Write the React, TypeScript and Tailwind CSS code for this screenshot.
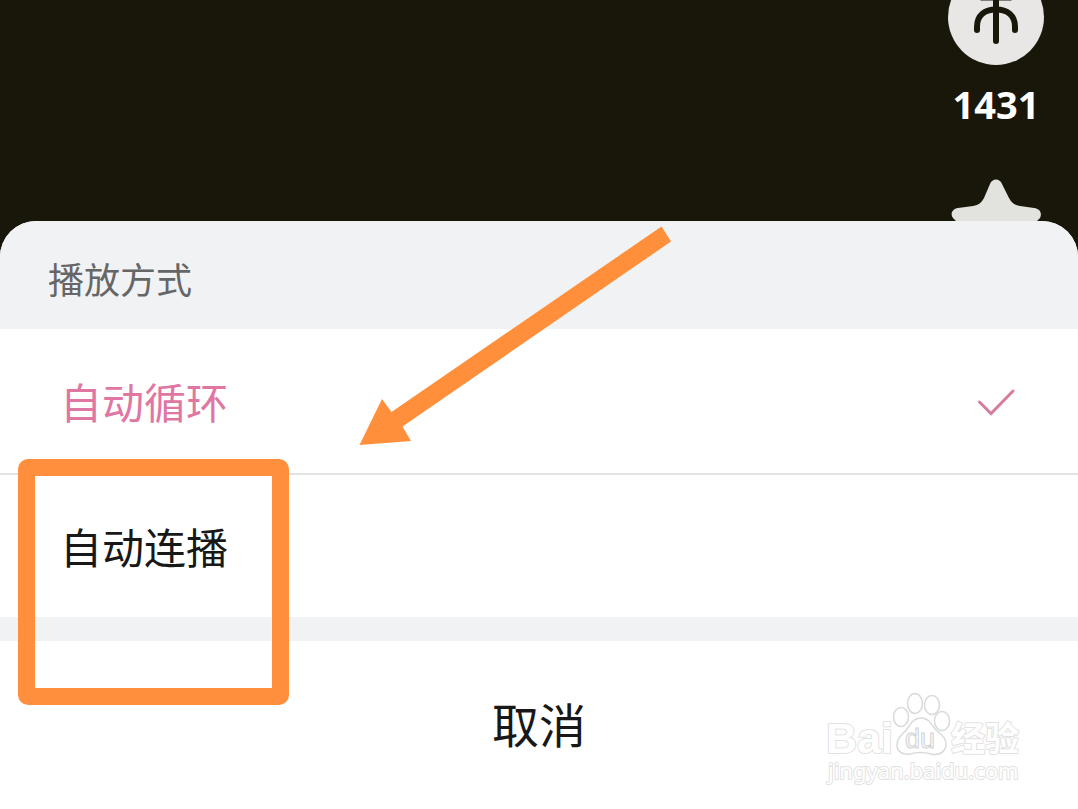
import { useState } from "react";

const modes = [
  { id: "loop", label: "自动循环" },
  { id: "continue", label: "自动连播" },
];

function VideoActions() {
  return (
    <div className="ml-auto flex w-[164px] flex-col items-center text-white">
      <button type="button" aria-label="投币" className="h-[66px] w-24 overflow-hidden">
        <svg viewBox="0 0 96 66" className="h-[66px] w-24" fill="none">
          <circle cx="48" cy="17" r="48" fill="#e9e6e6" />
          <g stroke="#181709" strokeWidth="6" strokeLinecap="round">
            <path d="M48 -10V41" />
            <path d="M34 -2.500H62" />
            <path d="M29 30V27C29 15 37 9.500 48 9.500C59 9.500 67 15 67 27V30" />
          </g>
        </svg>
      </button>
      <span className="mt-[18px] text-[38px] leading-10 font-bold">1431</span>
      <button type="button" aria-label="收藏" className="mt-[54px] h-[43px] w-24 overflow-hidden">
        <svg viewBox="0 0 96 43" className="h-[43px] w-24" fill="#e2e3df">
          <path d="M10 30L25 28C31 27 33 25 36 20L42 6C44 0 52 0 54 6L61 20C64 25 66 27 72 28L86 30C93 31 94 36 92 40L89 43H8L5 40C2 36 4 31 10 30Z" />
        </svg>
      </button>
    </div>
  );
}

function Watermark() {
  return (
    <svg
      viewBox="0 0 200 96"
      className="pointer-events-none absolute right-[54px] bottom-[22px] h-24 w-[200px]"
      fill="#fff"
      stroke="#e2e2e2"
      strokeWidth="2"
      strokeLinejoin="round"
    >
      <g fontWeight="700" paintOrder="stroke">
        <text x="2" y="62" fontSize="43" fontFamily="'Liberation Sans', sans-serif">Bai</text>
        <text x="127" y="60" fontSize="34" fontFamily="'Noto Sans CJK SC', sans-serif">经验</text>
      </g>
      <g strokeWidth="1.500" stroke="#dadada">
        <ellipse cx="77" cy="26" rx="7.500" ry="9.500" />
        <ellipse cx="91" cy="12.500" rx="7.500" ry="10" />
        <ellipse cx="108" cy="14" rx="7.500" ry="9.500" />
        <ellipse cx="118" cy="30" rx="7.500" ry="9.500" />
        <path d="M97 27C90 27 87 32 83 38C79 43 73 46 73 54C73 61 79 64 86 63C93 61 100 61 107 63C115 65 122 61 122 53C122 46 116 43 111 38C107 32 104 27 97 27Z" />
      </g>
      <text x="81" y="57" fontSize="27" strokeWidth="1" stroke="#d0d0d0" fontFamily="'Liberation Sans', sans-serif">du</text>
      <text x="4" y="88" fontSize="22" paintOrder="stroke" fontFamily="'Noto Sans', sans-serif">jingyan.baidu.com</text>
    </svg>
  );
}

export default function App() {
  const [selected, setSelected] = useState("loop");

  return (
    <main className="relative flex min-h-screen flex-col bg-[#181709] font-['Noto_Sans','Noto_Sans_CJK_SC',sans-serif]">
      <VideoActions />
      <section className="relative flex grow flex-col overflow-hidden rounded-t-[36px] bg-white text-[#181818]">
        <fieldset className="flex flex-col">
          <legend className="h-[108px] w-full bg-[#f1f2f4] px-12 pt-9 text-[36px] leading-[48px] text-[#666666]">
            播放方式
          </legend>
          {modes.map((mode) => (
            <label
              key={mode.id}
              className="flex h-36 cursor-pointer items-center justify-between border-t-2 border-[#e2e2e2] px-[60px] pt-1 text-[42px] leading-[60px] first-of-type:border-t-0 has-checked:text-[#e077a3]"
            >
              {mode.label}
              <input
                type="radio"
                name="mode"
                value={mode.id}
                checked={selected === mode.id}
                onChange={() => setSelected(mode.id)}
                className="peer sr-only"
              />
              <svg
                viewBox="0 0 44 36"
                className="hidden h-9 w-11 peer-checked:block"
                fill="none"
                stroke="#d57da0"
                strokeWidth="3"
                strokeLinecap="round"
              >
                <path d="M5.500 17L17 28.500L39 6" />
              </svg>
            </label>
          ))}
        </fieldset>
        <div className="h-6 bg-[#f1f2f4]" />
        <button type="button" className="h-[168px] w-full text-[47px] leading-[60px]">
          取消
        </button>
      </section>
      <div className="pointer-events-none absolute top-[459px] left-[18px] h-[246px] w-[271px] rounded-[10px] border-[17px] border-[#ff8f3d]" />
      <svg viewBox="0 0 314 222" className="pointer-events-none absolute top-[225px] left-[358px] h-[222px] w-[314px]" fill="#ff8f3a">
        <path d="M303.500 1.500L313 16.500L44.500 201.500L53 216L1.500 220L24 174L33.500 187Z" />
      </svg>
      <Watermark />
    </main>
  );
}
